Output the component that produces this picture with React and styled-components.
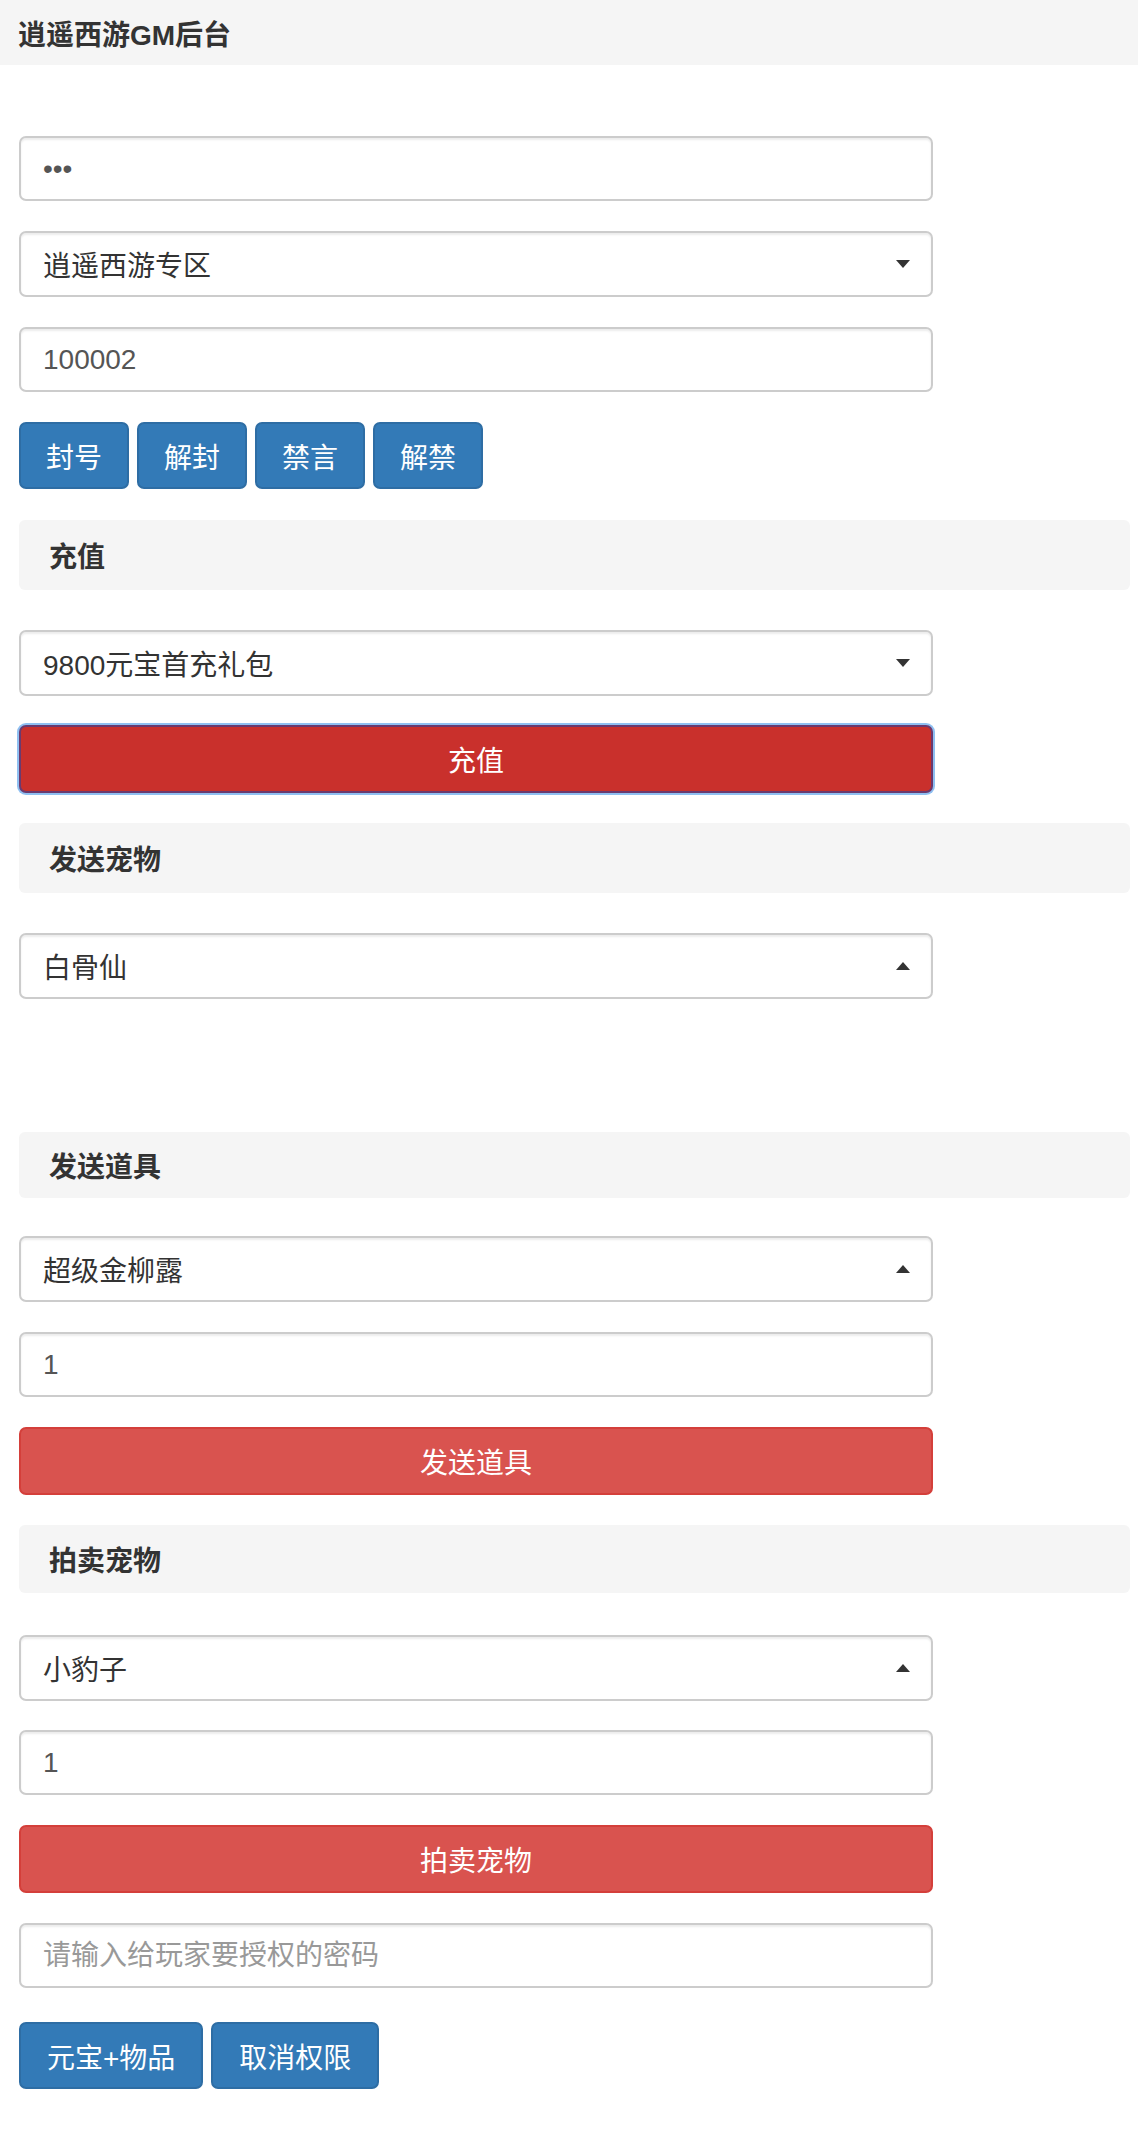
import React from 'react';
import styled, { createGlobalStyle } from 'styled-components';

const GlobalStyle = createGlobalStyle`
  html, body {
    margin: 0;
    padding: 0;
    background: #fff;
  }
  body {
    font-family: "Liberation Sans", "Noto Sans CJK SC", Arial, sans-serif;
    font-size: 28px;
    color: #333;
  }
  * {
    box-sizing: border-box;
  }
`;

const TopBar = styled.div`
  height: 65px;
  background: #f5f5f5;
  display: flex;
  align-items: center;
  padding-left: 18px;
  font-weight: 700;
  font-size: 28px;
  color: #333;
  margin-bottom: 71px;
`;

const Page = styled.div`
  padding: 0 8px 48px 19px;
  display: flex;
  flex-direction: column;
`;

const Input = styled.input`
  display: block;
  width: 914px;
  height: 65px;
  padding: 0 22px;
  margin-bottom: ${p => p.$gap ?? 30}px;
  font-family: inherit;
  font-size: 28px;
  color: #555;
  background: #fff;
  border: 2px solid #ccc;
  border-radius: 7px;
  box-shadow: inset 0 2px 2px rgba(0, 0, 0, 0.075);
  outline: none;

  &::placeholder {
    color: #999;
  }
`;

const SelectWrap = styled.div`
  position: relative;
  width: 914px;
  height: 66px;
  margin-bottom: ${p => p.$gap ?? 30}px;
`;

const Select = styled.div`
  height: 100%;
  display: flex;
  align-items: center;
  padding: 0 22px;
  font-size: 28px;
  color: #333;
  background: #fff;
  border: 2px solid #ccc;
  border-radius: 7px;
  box-shadow: inset 0 2px 2px rgba(0, 0, 0, 0.075);
`;

const Caret = styled.span`
  position: absolute;
  right: 23px;
  top: 50%;
  margin-top: -4px;
  width: 0;
  height: 0;
  border-left: 7px solid transparent;
  border-right: 7px solid transparent;
  ${p => p.$up
    ? 'border-bottom: 8px solid #333;'
    : 'border-top: 8px solid #333;'}
`;

const ButtonRow = styled.div`
  display: flex;
  gap: 8px;
  margin-bottom: 31px;
`;

const Button = styled.button`
  height: 67px;
  padding: 0 ${p => p.$pad ?? 25}px;
  font-family: inherit;
  font-size: 28px;
  font-weight: 400;
  color: #fff;
  background: #337ab7;
  border: 2px solid #2e6da4;
  border-radius: 7px;
  cursor: pointer;
  white-space: nowrap;
`;

const BlockButton = styled.button`
  display: block;
  width: 914px;
  height: 68px;
  margin-bottom: 30px;
  font-family: inherit;
  font-size: 28px;
  color: #fff;
  background: ${p => (p.$active ? '#c9302c' : '#d9534f')};
  border: 2px solid ${p => (p.$active ? '#6b3a6e' : '#d43f3a')};
  border-radius: 7px;
  box-shadow: ${p => (p.$active ? '0 0 0 2px #8fc0f2' : 'none')};
  cursor: pointer;
`;

const SectionHead = styled.div`
  height: ${p => p.$h ?? 68}px;
  display: flex;
  align-items: center;
  padding-left: 30px;
  background: #f5f5f5;
  border-radius: 6px;
  font-weight: 700;
  font-size: 28px;
  color: #333;
  margin-bottom: ${p => p.$gap ?? 40}px;
`;

const Spacer = styled.div`
  height: ${p => p.$h}px;
`;

function Dropdown({ value, up, gap }) {
  return (
    <SelectWrap $gap={gap}>
      <Select>{value}</Select>
      <Caret $up={up} />
    </SelectWrap>
  );
}

export default function App() {
  return (
    <>
      <GlobalStyle />
      <TopBar>逍遥西游GM后台</TopBar>
      <Page>
        <Input type="text" defaultValue="•••" />
        <Dropdown value="逍遥西游专区" />
        <Input type="text" defaultValue="100002" />
        <ButtonRow>
          <Button>封号</Button>
          <Button>解封</Button>
          <Button>禁言</Button>
          <Button>解禁</Button>
        </ButtonRow>

        <SectionHead $h={70}>充值</SectionHead>
        <Dropdown value="9800元宝首充礼包" gap={29} />
        <BlockButton $active>充值</BlockButton>

        <SectionHead $h={70}>发送宠物</SectionHead>
        <Dropdown value="白骨仙" up gap={0} />
        <Spacer $h={133} />

        <SectionHead $h={66} $gap={38}>发送道具</SectionHead>
        <Dropdown value="超级金柳露" up />
        <Input type="text" defaultValue="1" />
        <BlockButton>发送道具</BlockButton>

        <SectionHead $gap={42}>拍卖宠物</SectionHead>
        <Dropdown value="小豹子" up gap={29} />
        <Input type="text" defaultValue="1" />
        <BlockButton>拍卖宠物</BlockButton>

        <Input type="text" placeholder="请输入给玩家要授权的密码" $gap={34} />
        <ButtonRow>
          <Button $pad={26}>元宝+物品</Button>
          <Button $pad={26}>取消权限</Button>
        </ButtonRow>
      </Page>
    </>
  );
}
